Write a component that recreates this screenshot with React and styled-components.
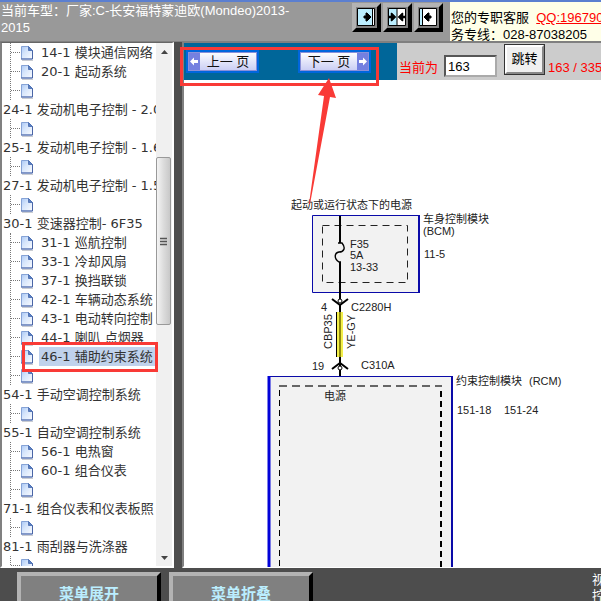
import React from 'react'
import styled, { createGlobalStyle, css } from 'styled-components'

const tree = [
    { items: ['14-1 模块通信网络', '20-1 起动系统', ''] },
    { title: '24-1 发动机电子控制 - 2.0', items: [''] },
    { title: '25-1 发动机电子控制 - 1.6', items: [''] },
    { title: '27-1 发动机电子控制 - 1.5', items: [''] },
    {
        title: '30-1 变速器控制- 6F35',
        items: [
            '31-1 巡航控制',
            '33-1 冷却风扇',
            '37-1 换挡联锁',
            '42-1 车辆动态系统',
            '43-1 电动转向控制',
            '44-1 喇叭 点烟器',
            '46-1 辅助约束系统',
            ''
        ]
    },
    { title: '54-1 手动空调控制系统', items: [''] },
    { title: '55-1 自动空调控制系统', items: ['56-1 电热窗', '60-1 组合仪表', ''] },
    { title: '71-1 组合仪表和仪表板照', items: [''] },
    { title: '81-1 雨刮器与洗涤器', items: [''] }
]

const selected = '46-1 辅助约束系统'

const PageIcon = () => (
    <svg width="14" height="16" viewBox="0 0 14 16" aria-hidden="true">
        <defs>
            <linearGradient id="sheet" x1="0" y1="0" x2="1" y2="1">
                <stop offset="0" stopColor="#a9c8f6" />
                <stop offset="0.4" stopColor="#d6e5fb" />
                <stop offset="1" stopColor="#fafcff" />
            </linearGradient>
        </defs>
        <path d="M2 15.500h11" fill="none" stroke="#c9ccd2" />
        <path d="M1.500 1.500h7l4 4v8.500h-11z" fill="url(#sheet)" stroke="#86a3d6" />
        <path d="M1 14h11.500v-8.500" fill="none" stroke="#4a65a6" />
        <path d="M8.500 1.500v4h4z" fill="#5c80c0" stroke="#4468ae" strokeWidth="0.8" />
    </svg>
)

const arrowRight = (x) => `M${x} 8h2v-3h1l4 4-4 4h-1v-3h-2z`
const arrowLeft = (x) => `M${x} 8h-2v-3h-1l-4 4 4 4h1v-3h2z`

const PaneIcon = ({ kind }) => (
    <svg width="19" height="19" viewBox="0 0 19 19" aria-hidden="true">
        <path d="M0.5 0.5h17v17h-17z" fill="#fff" stroke="#000" />
        {kind === 'right' && <>
            <path d="M1 1h14v16h-14z" fill="#bef" />
            <path d="M15.5 1v16" stroke="#000" />
            <path d={arrowRight(7)} stroke="#000" />
        </>}
        {kind === 'both' && <>
            <path d="M1 1h8v16h-8z" fill="#bef" />
            <path d="M9 1v16" stroke="#000" />
            <path d={arrowRight(1)} stroke="#000" strokeWidth="0.5" />
            <path d={arrowLeft(17)} stroke="#000" strokeWidth="0.5" />
        </>}
        {kind === 'left' && <>
            <path d="M1 1h2v16h-2z" fill="#bef" />
            <path d="M3.5 1v16" stroke="#000" />
            <path d={arrowLeft(12)} stroke="#000" />
        </>}
    </svg>
)

const PagerArrow = ({ left }) => (
    <svg width="11" height="17" viewBox="0 0 11 17" aria-hidden="true">
        <path d="M0 0h11v17h-11z" fill="#7480e0" />
        <path d={left ? 'M1 8.5l4-4v2.500h4v3h-4v2.500z' : 'M10 8.5l-4-4v2.500h-4v3h4v2.500z'} fill="#fff" />
    </svg>
)

const Wiring = () => (
    <Sheet width="417" height="487" viewBox="184 80 417 487">
        <text x="291" y="209">起动或运行状态下的电源</text>
        <path d="M312.5 215.5h106v77h-106z" fill="#f2f2f2" stroke="#0a0aa8" />
        <path d="M419 215v78" stroke="#0a0aa8" strokeWidth="2" />
        <path d="M322.5 225.5h85v57h-85z" fill="none" stroke="#222" strokeDasharray="7 5" />
        <path d="M340 216v27M340 262v39" stroke="#000" strokeWidth="2" />
        <path d="M338 243h4c4 5 2 9-3 9-5 1-5 7 0 10h2" fill="none" stroke="#000" strokeWidth="1.4" />
        <text x="350" y="248">F35</text>
        <text x="350" y="259">5A</text>
        <text x="350" y="271">13-33</text>
        <text x="423" y="223">车身控制模块</text>
        <text x="423" y="235">(BCM)</text>
        <text x="424" y="258">11-5</text>

        <text x="321" y="311">4</text>
        <text x="351" y="311">C2280H</text>
        <path d="M332 299l8 6 8-6" fill="none" stroke="#000" strokeWidth="2" />
        <circle cx="340" cy="301" r="2" fill="#fff" stroke="#000" />
        <path d="M336.5 312v45" stroke="#000" />
        <path d="M340 304v72" stroke="#000" strokeWidth="2" />
        <path d="M337 312h6v45h-6z" fill="#f2ee4a" />
        <path d="M340 312v45" stroke="#8f8b10" strokeWidth="2" />
        <path d="M332 369l8-6 8 6" fill="none" stroke="#000" strokeWidth="2" />
        <circle cx="340" cy="368" r="2" fill="#fff" stroke="#000" />
        <text transform="translate(332 349) rotate(-90)">CBP35</text>
        <text transform="translate(355 349) rotate(-90)">YE-GY</text>
        <text x="312" y="370">19</text>
        <text x="361" y="369">C310A</text>

        <path d="M268 376h185v200h-185z" fill="#f2f2f2" />
        <path d="M268 376.5h185" stroke="#0a0aa8" />
        <path d="M269 376v200" stroke="#0202d8" strokeWidth="3" />
        <path d="M452 376v200" stroke="#0a0aa8" strokeWidth="2" />
        <path d="M279 386h163" stroke="#666" strokeWidth="2" strokeDasharray="8 5" />
        <path d="M279.5 390v180" stroke="#000" strokeDasharray="6 4" />
        <path d="M441 391v180" stroke="#000" strokeWidth="2" strokeDasharray="6 4" />
        <text x="324" y="400">电源</text>
        <text x="456" y="385">约束控制模块</text>
        <text x="529" y="385">(RCM)</text>
        <text x="457" y="414">151-18</text>
        <text x="504" y="414">151-24</text>
    </Sheet>
)

const App = () => {
    return (
        <Page>
            <GlobalStyle />
            <Header>
                <Vehicle>当前车型：厂家:C-长安福特蒙迪欧(Mondeo)2013-2015</Vehicle>
                <PaneButtons>
                    <PaneButton aria-label="right pane"><PaneIcon kind="right" /></PaneButton>
                    <PaneButton aria-label="both panes"><PaneIcon kind="both" /></PaneButton>
                    <PaneButton aria-label="left pane"><PaneIcon kind="left" /></PaneButton>
                </PaneButtons>
                <Service>
                    <p>您的专职客服&nbsp; <a href="#qq">QQ:196790</a></p>
                    <p>务专线：028-87038205</p>
                </Service>
            </Header>
            <Main>
                <Sidebar>
                    <Tree>
                        {tree.map((group, i) => (
                            <li key={i}>
                                {group.title && <Group href="#group">{group.title}</Group>}
                                <Branch>
                                    {group.items.map((item, j) => (
                                        <Leaf key={j}>
                                            <PageIcon />
                                            {item && <Item href="#item" $active={item === selected}>{item}</Item>}
                                        </Leaf>
                                    ))}
                                </Branch>
                            </li>
                        ))}
                    </Tree>
                    <Scrollbar>
                        <svg width="16" height="19" viewBox="0 0 16 19"><path d="M5 11h7l-3.5-4z" fill="#444" /></svg>
                        <Track>
                            <Thumb>
                                <svg width="7" height="9" viewBox="0 0 7 9">
                                    <path d="M0 1.5h7M0 4.5h7M0 7.5h7" stroke="#555" strokeWidth="1.4" />
                                </svg>
                            </Thumb>
                        </Track>
                        <svg width="16" height="19" viewBox="0 0 16 19"><path d="M5 9h7l-3.5 4z" fill="#444" /></svg>
                    </Scrollbar>
                    <ItemMark />
                </Sidebar>
                <Content>
                    <Toolbar>
                        <Pager>
                            <PagerLink href="#prev"><PagerArrow left /><span>上一 页</span></PagerLink>
                            <PagerLink href="#next"><span>下一 页</span><PagerArrow /></PagerLink>
                            <PagerMark />
                        </Pager>
                        <Jump>
                            <label htmlFor="page">当前为</label>
                            <input id="page" defaultValue="163" />
                            <button>跳转</button>
                            <span>163 / 335</span>
                        </Jump>
                    </Toolbar>
                    <Wiring />
                    <Arrow width="40" height="130" viewBox="300 76 40 130" aria-hidden="true">
                        <path d="M309 204L324 96l-6-1 11-17 7 20-6-1-20 107z" fill="#f93a36" />
                    </Arrow>
                </Content>
            </Main>
            <Footer>
                <MenuButton>菜单展开</MenuButton>
                <MenuButton>菜单折叠</MenuButton>
                <Note>视<br />控</Note>
            </Footer>
        </Page>
    )
}

export default App

const GlobalStyle = createGlobalStyle`
    *{
        box-sizing: border-box;
        margin: 0;
        padding: 0;
    }

    body{
        font-family: "Liberation Sans", "Noto Sans CJK SC", sans-serif;
        font-size: 13px;
        overflow: hidden;
    }
`

const raised = css`
    border: 4px solid;
    border-color: #b3b3b3 #000 #000 #b3b3b3;
    background-color: #808080;
`

const Page = styled.div`
    height: 100vh;
    display: flex;
    flex-direction: column;
    background-color: #4d4d4d;
    overflow: hidden;
`

const Header = styled.header`
    display: flex;
    align-items: flex-start;
    background-color: #999;
    border-top: 2px solid #5b7fd0;
    border-bottom: 1px solid #808080;
`

const Vehicle = styled.h1`
    flex: 1;
    min-width: 0;
    padding: 0 56px 0 1px;
    font-size: 13px;
    font-weight: 400;
    line-height: 17px;
    color: #fff;
`

const PaneButtons = styled.div`
    display: flex;
    gap: 2px;
    padding: 1px 7px 0 0;
`

const PaneButton = styled.button`
    ${raised}
    width: 29px;
    height: 29px;
    display: flex;
    align-items: center;
    justify-content: center;
`

const Service = styled.div`
    width: 151px;
    height: 39px;
    padding: 7px 0 0 1px;
    background-color: #ffffe8;
    line-height: 17px;
    white-space: nowrap;
    overflow: hidden;
    a{
        color: #f00;
    }
`

const Main = styled.main`
    flex: 1;
    min-height: 0;
    display: flex;
    gap: 8px;
`

const Sidebar = styled.nav`
    position: relative;
    width: 174px;
    display: flex;
    background-color: #fff;
    border: 2px solid;
    border-color: #666 #fff #fff #808080;
    border-top-width: 1px;
`

const Tree = styled.ul`
    flex: 1;
    min-width: 0;
    list-style: none;
    overflow: hidden;
    white-space: nowrap;
    font-family: "DejaVu Sans", "Noto Sans CJK SC", sans-serif;
    line-height: 19px;
    a{
        color: #333;
        text-decoration: none;
    }
`

const Group = styled.a`
    display: block;
    height: 19px;
    padding-left: 1px;
`

const Branch = styled.ul`
    list-style: none;
    margin-left: 8px;
    border-left: 1px dotted #777;
`

const Leaf = styled.li`
    display: flex;
    align-items: center;
    height: 19px;
    &::before{
        content: "";
        width: 9px;
        border-top: 1px dotted #777;
    }
`

const Item = styled.a`
    height: 19px;
    margin-left: 5px;
    padding: 0 2px;
    background-color: ${({ $active }) => $active ? '#c0d2ec' : 'transparent'};
`

const ItemMark = styled.div`
    position: absolute;
    top: 299px;
    left: 20px;
    width: 136px;
    height: 30px;
    border: 3px solid #f93a36;
`

const Scrollbar = styled.div`
    width: 16px;
    display: flex;
    flex-direction: column;
    background-color: #f0f0f0;
`

const Track = styled.div`
    flex: 1;
    padding-top: 95px;
`

const Thumb = styled.div`
    width: 15px;
    height: 168px;
    display: flex;
    align-items: center;
    justify-content: center;
    border: 1px solid #999;
    border-radius: 2px;
    background: linear-gradient(to right, #f4f4f4, #dcdcdc 50%, #c8c8c8);
`

const Content = styled.section`
    position: relative;
    flex: 1;
    min-width: 0;
    background-color: #fff;
    border: 2px solid;
    border-color: #808080 #fff #fff #808080;
    border-top-width: 1px;
    border-right-width: 0;
`

const Toolbar = styled.div`
    display: flex;
    height: 37px;
`

const Pager = styled.div`
    position: relative;
    width: 213px;
    display: flex;
    align-items: center;
    justify-content: space-between;
    padding: 0 26px 0 2px;
    background-color: #069;
`

const PagerLink = styled.a`
    width: 73px;
    height: 23px;
    display: flex;
    border: 2px solid #06d;
    background: linear-gradient(to bottom, #fff, #c8ccf4);
    box-shadow: inset 0 0 0 1px #8a90d8;
    padding: 1px;
    color: #111;
    text-decoration: none;
    line-height: 17px;
    span{
        flex: 1;
        text-align: center;
    }
`

const PagerMark = styled.div`
    position: absolute;
    top: 4px;
    left: -4px;
    width: 199px;
    height: 39px;
    border: 3px solid #f93a36;
`

const Jump = styled.div`
    flex: 1;
    min-width: 0;
    display: flex;
    align-items: flex-start;
    padding-left: 2px;
    background-color: #ccc;
    color: #f00;
    white-space: nowrap;
    overflow: hidden;
    label, span{
        padding-top: 16px;
        line-height: 18px;
    }
    input{
        flex: none;
        width: 53px;
        height: 22px;
        margin: 12px 8px 0 6px;
        padding-left: 2px;
        border: 2px inset #aaa;
        font: inherit;
    }
    button{
        flex: none;
        width: 39px;
        height: 29px;
        margin: 2px 4px 0 0;
        padding-bottom: 4px;
        border: 2px solid;
        border-color: #fff #888 #888 #fff;
        outline: 1px solid #333;
        background-color: #f0f0f0;
        font: inherit;
    }
`

const Sheet = styled.svg`
    display: block;
    text{
        font-family: "Liberation Sans", "Noto Sans CJK SC", sans-serif;
        font-size: 11px;
        fill: #222;
    }
`

const Arrow = styled.svg`
    position: absolute;
    top: 33px;
    left: 116px;
`

const Footer = styled.footer`
    height: 33px;
    display: flex;
    align-items: flex-start;
    gap: 8px;
    padding: 4px 0 0 17px;
    overflow: hidden;
`

const MenuButton = styled.button`
    ${raised}
    width: 144px;
    height: 40px;
    color: #bef;
    font-family: "Liberation Sans", "Noto Sans CJK SC", sans-serif;
    font-size: 15px;
    font-weight: 700;
`

const Note = styled.p`
    width: 9px;
    margin-left: auto;
    color: #fff;
    font-size: 13px;
    line-height: 16px;
    white-space: nowrap;
    overflow: hidden;
`
